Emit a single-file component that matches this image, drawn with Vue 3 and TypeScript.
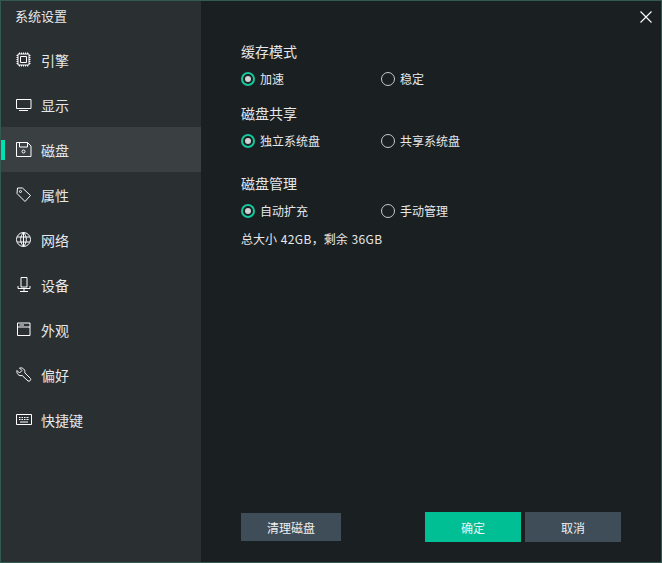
<script setup lang="ts">
interface NavItem { key: string; label: string; paths: string[] }
const nav: NavItem[] = [
  { key: 'engine', label: '引擎', paths: ['M2 2h11v11H2z', 'M4.500 4.500h6v6h-6z', 'M3.500 .5v1.500M5.500 .5v1.500M7.500 .5v1.500M9.500 .5v1.500M11.500 .5v1.500M3.500 13v1.500M5.500 13v1.500M7.500 13v1.500M9.500 13v1.500M11.500 13v1.500M.5 3.500H2M.5 5.500H2M.5 7.500H2M.5 9.500H2M.5 11.500H2M13 3.500h1.500M13 5.500h1.500M13 7.500h1.500M13 9.500h1.500M13 11.500h1.500'] },
  { key: 'display', label: '显示', paths: ['M.5 2.500h14.500v9H.5z', 'M3 13.500h9'] },
  { key: 'disk', label: '磁盘', paths: ['M.5.5h11l3.500 3.500v10.500H.5z', 'M3.500 .5v4.500h8V.5', 'M7.500 8a1.500 1.500 0 1 0 0 3a1.500 1.500 0 1 0 0-3z'] },
  { key: 'props', label: '属性', paths: ['M1.500 1h5l8 7.500-5.500 6-8-8z', 'M4.500 3.500a1 1 0 1 0 0 2a1 1 0 1 0 0-2z'] },
  { key: 'network', label: '网络', paths: ['M7.500 .5a7 7 0 1 0 0 14a7 7 0 1 0 0-14z', 'M7.500 .5c-3.800 4-3.800 10 0 14M7.500 .5c3.800 4 3.800 10 0 14M7.500 .5v14M1.300 5h12.400M1.300 10h12.400'] },
  { key: 'device', label: '设备', paths: ['M5 .5h6v9.500H5z', 'M2 9v2.500h12V9', 'M8 11.500v3M4 14.500h8'] },
  { key: 'look', label: '外观', paths: ['M1.500 1h12.500v12.500H1.500z', 'M1.500 5h12.500', 'M3.500 3h4.500'] },
  { key: 'prefs', label: '偏好', paths: ['M1 3.500L3.500 6 6 3.500 3.500 1C6.500 .2 9.500 2.500 8.800 5.800L14.500 11.500C15.500 12.800 13.500 15 12 14L6.200 8.500C3 9.500 .2 6.500 1 3.500z'] },
  { key: 'keys', label: '快捷键', paths: ['M.5 2.500h15v10H.5z', 'M3 5.500h1.500M5.500 5.500h1.500M8 5.500h1.500M10.500 5.500h2M3 7.500h1.500M5.500 7.500h1.500M8 7.500h1.500M10.500 7.500h2M4 10h8'] },
]
interface Group { title: string; cls: string; options: string[] }
const groups: Group[] = [
  { title: '缓存模式', cls: 'g1', options: ['加速', '稳定'] },
  { title: '磁盘共享', cls: 'g2', options: ['独立系统盘', '共享系统盘'] },
  { title: '磁盘管理', cls: 'g3', options: ['自动扩充', '手动管理'] },
]
</script>

<template>
  <div class="win">
    <aside class="side">
      <div class="title">系统设置</div>
      <nav class="nav">
        <div v-for="n in nav" :key="n.key" class="item" :class="{ active: n.key === 'disk' }">
          <svg class="ico" viewBox="0 0 16 16" width="16" height="16" fill="none" stroke="#fff" stroke-width="1">
            <path v-for="(d, i) in n.paths" :key="i" :d="d" />
          </svg>
          <span>{{ n.label }}</span>
        </div>
      </nav>
    </aside>
    <main class="main">
      <svg class="close" viewBox="0 0 12 12" width="12" height="12" stroke="#fff" stroke-width="1.100">
        <path d="M.5.5l11 11M11.500.5l-11 11" />
      </svg>
      <section v-for="g in groups" :key="g.title" class="group" :class="g.cls">
        <h3 class="head">{{ g.title }}</h3>
        <div class="opts">
          <label v-for="(o, i) in g.options" :key="o" class="opt">
            <span class="radio" :class="{ on: i === 0 }"></span>
            <span>{{ o }}</span>
          </label>
        </div>
      </section>
      <p class="info">总大小 <span class="num">42GB</span>，剩余 <span class="num">36GB</span></p>
      <footer class="foot">
        <button class="btn clean">清理磁盘</button>
        <div class="right">
          <button class="btn big ok">确定</button>
          <button class="btn big">取消</button>
        </div>
      </footer>
    </main>
  </div>
</template>

<style>
html, body { margin: 0; background: #1a1f22; }
</style>

<style scoped>
.win {
  box-sizing: border-box;
  width: 662px;
  height: 563px;
  display: flex;
  border: 1px solid #335a50;
  font-family: "Noto Sans CJK SC", "Liberation Sans", sans-serif;
  color: #e6e8e9;
  overflow: hidden;
}
.side {
  width: 200px;
  flex: none;
  background: #2a2f32;
  display: flex;
  flex-direction: column;
}
.title {
  height: 36px;
  line-height: 29px;
  padding-left: 14px;
  font-size: 13px;
}
.nav { display: flex; flex-direction: column; }
.item {
  position: relative;
  height: 45px;
  display: flex;
  align-items: center;
  padding-left: 15px;
  gap: 9px;
  font-size: 14px;
}
.item span { line-height: 20px; padding-top: 1px; }
.ico { flex: none; margin-top: 1px; }
.item.active { background: #3a3f42; }
.item.active::before {
  content: "";
  position: absolute;
  left: 0;
  top: 13px;
  width: 4px;
  height: 20px;
  background: #00e0b0;
}
.main {
  position: relative;
  flex: 1;
  background: #1a1f22;
  padding: 0 40px;
  display: flex;
  flex-direction: column;
}
.close { position: absolute; top: 10px; right: 9px; }
.group { display: flex; flex-direction: column; }
.g1 { margin-top: 40px; }
.g2 { margin-top: 14px; }
.g3 { margin-top: 22px; }
.head {
  margin: 0;
  font-size: 14px;
  font-weight: 400;
  line-height: 20px;
}
.opts { display: flex; margin-top: 8px; }
.opt {
  width: 140px;
  height: 20px;
  display: flex;
  align-items: center;
  gap: 5px;
  font-size: 12px;
  line-height: 20px;
}
.radio {
  box-sizing: border-box;
  width: 14px;
  height: 14px;
  border-radius: 50%;
  border: 1.5px solid #c8cacb;
  display: flex;
  align-items: center;
  justify-content: center;
}
.radio.on { border: 2px solid #14c79c; }
.radio.on::after {
  content: "";
  width: 6px;
  height: 6px;
  border-radius: 50%;
  background: #d0d2d3;
}
.info {
  margin: 8px 0 0;
  font-size: 12px;
  line-height: 20px;
  word-spacing: 1px;
}
.num { letter-spacing: .4px; }
.foot {
  margin-top: auto;
  margin-bottom: 20px;
  display: flex;
  align-items: center;
  justify-content: space-between;
}
.right { display: flex; gap: 4px; }
.btn {
  border: 0;
  padding: 0;
  color: #eef0f1;
  font: inherit;
  font-size: 12px;
  background: #3e4d57;
}
.clean { width: 100px; height: 28px; }
.big { width: 96px; height: 30px; }
.ok { background: #00bf94; }
</style>
